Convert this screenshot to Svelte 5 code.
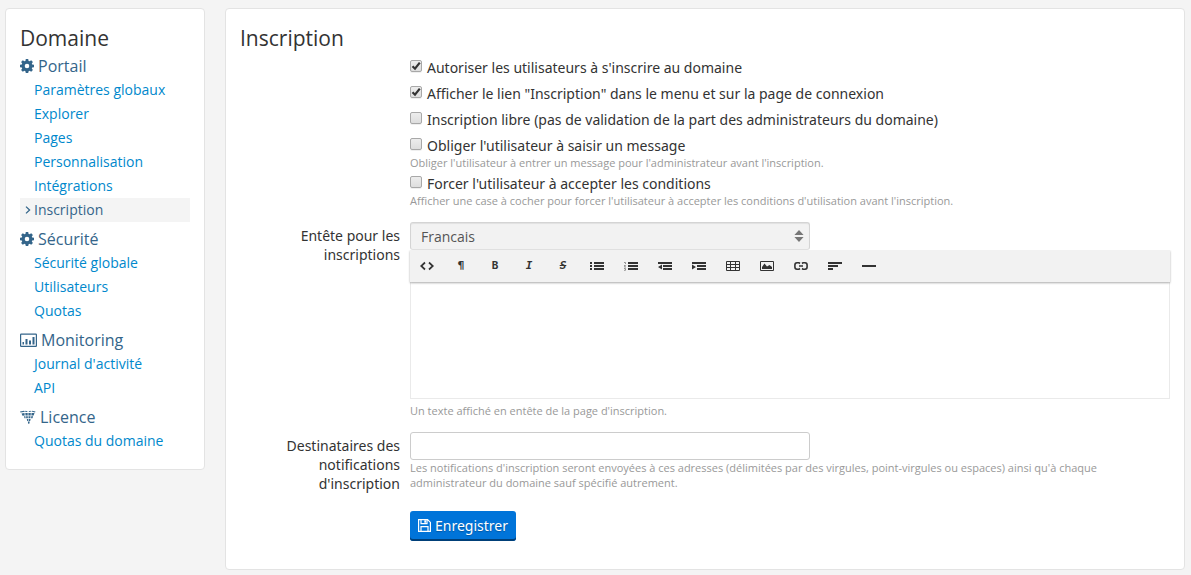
<script>
  const groups = [
    { title: 'Portail', icon: 'gear', items: ['Paramètres globaux', 'Explorer', 'Pages', 'Personnalisation', 'Intégrations', 'Inscription'] },
    { title: 'Sécurité', icon: 'gear', items: ['Sécurité globale', 'Utilisateurs', 'Quotas'] },
    { title: 'Monitoring', icon: 'chart', items: ["Journal d'activité", 'API'] },
    { title: 'Licence', icon: 'licence', items: ['Quotas du domaine'] }
  ];
  const current = 'Inscription';

  let options = $state([
    { id: 'allow', label: "Autoriser les utilisateurs à s'inscrire au domaine", checked: true },
    { id: 'link', label: 'Afficher le lien "Inscription" dans le menu et sur la page de connexion', checked: true },
    { id: 'free', label: 'Inscription libre (pas de validation de la part des administrateurs du domaine)', checked: false },
    { id: 'message', label: "Obliger l'utilisateur à saisir un message", checked: false, help: "Obliger l'utilisateur à entrer un message pour l'administrateur avant l'inscription." },
    { id: 'terms', label: "Forcer l'utilisateur à accepter les conditions", checked: false, help: "Afficher une case à cocher pour forcer l'utilisateur à accepter les conditions d'utilisation avant l'inscription." }
  ]);

  const tools = ['html', 'paragraph', 'bold', 'italic', 'strike', 'bullets', 'numbers', 'outdent', 'indent', 'table', 'image', 'link', 'align', 'rule'];
  const letters = { paragraph: '¶', bold: 'B', italic: 'I', strike: 'S' };
</script>

<div class="page">
  <nav class="panel sidebar">
    <h2>Domaine</h2>
    {#each groups as group}
      <section>
        <h3>
          {#if group.icon === 'gear'}
            <svg width="14" height="14" viewBox="0 0 14 14" aria-hidden="true">
              <path fill="currentColor" fill-rule="evenodd" d="M5.8 0h2.4l.4 1.9 1 .4 1.6-1.1 1.7 1.7-1.1 1.6.4 1 1.8.3v2.4l-1.8.4-.4 1 1.1 1.5-1.7 1.7-1.6-1-1 .4-.4 1.8H5.8l-.4-1.8-1-.4-1.6 1-1.7-1.7 1.1-1.5-.4-1L0 8.2V5.8l1.8-.3.4-1-1.1-1.6 1.7-1.7 1.6 1.1 1-.4zM7 4.7a2.3 2.3 0 1 0 0 4.6 2.3 2.3 0 0 0 0-4.6z" />
            </svg>
          {:else if group.icon === 'chart'}
            <svg width="17" height="14" viewBox="0 0 17 14" aria-hidden="true">
              <rect x=".6" y="1.1" width="15.8" height="12.2" rx=".6" fill="none" stroke="currentColor" stroke-width="1.2" />
              <path fill="currentColor" d="M2.500 9h1.500v2.500H2.500zM5.500 6h2v5.500h-2zM9 7.500h2v4H9zM12.500 4h2v7.500h-2z" />
            </svg>
          {:else}
            <svg width="16" height="14" viewBox="0 0 16 14" aria-hidden="true">
              <path fill="currentColor" d="M0 1.500l4-.7 1 1-4.500.7zM5.500.8l2.200.5-.7.700-2-.3zM8.500 1.300l2-.6.8.700-2 .6zM12 .700l3.500.7-.5 1-3.500-.8zM1.500 3.400l3-.4.2 2.500-2.200.2zM5.300 3h2.400v2.500H5.500zM8.400 3h2.400l-.1 2.500H8.400zM11.500 3h3l-.8 2.600h-2.300zM4 6.200h1.400l.2 2H4.500zM6.100 6.200h1.700v2H6.200zM8.500 6.200h2l-.1 2H8.500zM11.200 6.200h1.900l-.6 2h-1.400zM6.800 9h1.300v2h-.9zM8.700 9h1.900l-.4 2H8.700zM7.800 11.600h2l-.5 2.200H8.200z" />
            </svg>
          {/if}
          {group.title}
        </h3>
        <ul>
          {#each group.items as item}
            <li>
              <a href="#{item}" class:active={item === current} aria-current={item === current ? 'page' : undefined}>
                {#if item === current}
                  <svg class="chevron" width="6" height="8" viewBox="0 0 6 8" aria-hidden="true"><path d="M1 .6L4.600 4 1 7.400" fill="none" stroke="currentColor" stroke-width="1.300" /></svg>
                {/if}
                {item}
              </a>
            </li>
          {/each}
        </ul>
      </section>
    {/each}
  </nav>

  <main class="panel content">
    <h1>Inscription</h1>
    <form onsubmit={(e) => e.preventDefault()}>
      <div class="row">
        <div class="field checks">
          {#each options as option}
            <div class="option" class:helped={option.help}>
              <label class="check" for={option.id}>
                <input id={option.id} type="checkbox" bind:checked={option.checked} />
                <span>{option.label}</span>
              </label>
              {#if option.help}<p class="help">{option.help}</p>{/if}
            </div>
          {/each}
        </div>
      </div>

      <div class="row">
        <label class="name" for="language">Entête pour les inscriptions</label>
        <div class="field">
          <div class="select">
            <select id="language"><option>Francais</option></select>
            <svg width="10" height="12" viewBox="0 0 10 12" aria-hidden="true"><path d="M5 0l4.600 5H.4zM.4 7h9.200L5 12z" fill="#777" /></svg>
          </div>
          <div class="toolbar" role="toolbar">
            {#each tools as tool}
              <button type="button" aria-label={tool}>
                {#if letters[tool]}
                  <span class="letter {tool}">{letters[tool]}</span>
                {:else}
                  <svg width="14" height="10" viewBox="0 0 14 10" aria-hidden="true" fill="#333">
                    {#if tool === 'html'}
                      <path d="M5 1.500L1.200 5 5 8.500M9 1.500L12.800 5 9 8.500" fill="none" stroke="#333" stroke-width="1.700" />
                    {:else if tool === 'bullets'}
                      <path d="M0 1h2v2H0zM0 4h2v2H0zM0 7h2v2H0zM4 1h10v2H4zM4 4h10v2H4zM4 7h10v2H4z" />
                    {:else if tool === 'numbers'}
                      <path d="M4 1h10v2H4zM4 4h10v2H4zM4 7h10v2H4z" />
                      <path d="M0 1.500h1.500V3M0 4.500h1.500L.4 6H2M0 7.500h1.500v1.800H0" fill="none" stroke="#888" stroke-width=".9" />
                    {:else if tool === 'outdent'}
                      <path d="M0 1h14v2H0zM5 4h9v2H5zM5 7h9v2H5zM0 6l4-2.500v5z" />
                    {:else if tool === 'indent'}
                      <path d="M0 1h14v2H0zM5 4h9v2H5zM5 7h9v2H5zM0 3.500L4 6 0 8.500z" />
                    {:else if tool === 'table'}
                      <path d="M.5.500h13v9H.5zM.5 3.500h13M.5 6.500h13M4.500.500v9M9.500.500v9" fill="none" stroke="#333" />
                    {:else if tool === 'image'}
                      <path d="M.5.500h13v9H.5z" fill="none" stroke="#333" />
                      <path d="M2 8V6l2.500-3.500L7 5.500 9.500 4 12 6v2z" />
                    {:else if tool === 'link'}
                      <path d="M6 2.500L5 1.800H3A2.200 2.200 0 0 0 .9 4v2A2.200 2.200 0 0 0 3 8.200h2l1-.7M8 2.500l1-.7h2A2.200 2.200 0 0 1 13.100 4v2A2.200 2.200 0 0 1 11 8.200H9l-1-.7M5 5h4" fill="none" stroke="#333" stroke-width="1.600" />
                    {:else if tool === 'align'}
                      <path d="M0 1h14v2H0zM0 4h10v2H0zM0 7h5v2H0z" />
                    {:else}
                      <path d="M0 4h14v2H0z" />
                    {/if}
                  </svg>
                {/if}
              </button>
            {/each}
          </div>
          <textarea aria-label="Entête pour les inscriptions"></textarea>
          <p class="help">Un texte affiché en entête de la page d'inscription.</p>
        </div>
      </div>

      <div class="row">
        <label class="name" for="recipients">Destinataires des notifications d'inscription</label>
        <div class="field">
          <input id="recipients" class="text" type="text" />
          <p class="help">Les notifications d'inscription seront envoyées à ces adresses (délimitées par des virgules, point-virgules ou espaces) ainsi qu'à chaque administrateur du domaine sauf spécifié autrement.</p>
        </div>
      </div>

      <div class="row submit-row">
        <div class="field">
          <button class="save" type="submit">
            <svg width="13" height="13" viewBox="0 0 13 13" aria-hidden="true">
              <path d="M.6.600h9l2.800 2.800v9H.6zM3 .600v4h6v-4M3 12.400V7.600h7v4.800" fill="none" stroke="#fff" stroke-width="1.200" />
              <path d="M6.300 1.200H8v2.600H6.300z" fill="#fff" />
            </svg>
            Enregistrer
          </button>
        </div>
      </div>
    </form>
  </main>
</div>

<style>
  :global(body) {
    margin: 0;
    background: #f4f4f4;
    color: #333;
    font: 14px/19px "Open Sans", sans-serif;
  }
  * { box-sizing: border-box; }
  .page {
    display: flex;
    align-items: flex-start;
    gap: 20px;
    padding: 8px 6px 5px 5px;
  }
  .panel {
    background: #fff;
    border: 1px solid #e3e3e3;
    border-radius: 4px;
    padding: 14px;
  }
  .sidebar {
    flex: 0 0 200px;
    padding-bottom: 16px;
  }
  .content {
    flex: 1;
    min-width: 0;
  }
  h1, h2 {
    margin: 0 0 1px;
    font-size: 21px;
    line-height: 30px;
    font-weight: 400;
  }
  section { margin-bottom: 5px; }
  section:last-child { margin-bottom: 0; }
  h3 {
    display: flex;
    align-items: center;
    gap: 4px;
    margin: 0;
    font-size: 16px;
    line-height: 24px;
    font-weight: 400;
    color: #34658a;
  }
  ul {
    margin: 0;
    padding: 0;
    list-style: none;
  }
  li a {
    position: relative;
    display: block;
    padding-left: 14px;
    line-height: 24px;
    color: #0088cc;
    text-decoration: none;
  }
  li a.active {
    background: #f4f4f4;
    color: #34658a;
  }
  .chevron {
    position: absolute;
    left: 5px;
    top: 8px;
  }
  .row {
    display: flex;
    gap: 10px;
    margin-bottom: 14px;
  }
  .name {
    flex: 0 0 160px;
    padding: 4px 0 0 32px;
    text-align: right;
  }
  .name, .check, .save {
    font-family: "Noto Sans", "Open Sans", sans-serif;
  }
  .field {
    flex: 1;
    min-width: 0;
  }
  .field:first-child { margin-left: 170px; }
  .checks { padding-top: 2px; }
  .option { margin-bottom: 5px; }
  .option.helped { margin-bottom: 2px; }
  .option:last-child { margin-bottom: 0; }
  .check {
    display: flex;
    align-items: flex-start;
    gap: 5px;
    padding-top: 2px;
  }
  .check input {
    appearance: none;
    flex: none;
    width: 12px;
    height: 12px;
    margin: 2px 0 0;
    border: 1px solid #a8a8a8;
    border-radius: 2px;
    background: linear-gradient(#ededed, #dedede);
    box-shadow: 0 1px 0 #00000010;
  }
  .check input:checked {
    background: url("data:image/svg+xml,%3Csvg xmlns='http://www.w3.org/2000/svg' viewBox='0 0 10 10'%3E%3Cpath d='M1.500 5.200L4 7.700 8.800 1.600' fill='none' stroke='%23333' stroke-width='2.200'/%3E%3C/svg%3E") center / 10px 10px no-repeat, linear-gradient(#ededed, #dedede);
  }
  .help {
    margin: 0;
    font-size: 11px;
    line-height: 15px;
    color: #999;
  }
  .select {
    position: relative;
    max-width: 400px;
  }
  .select svg {
    position: absolute;
    right: 6px;
    top: 8px;
    pointer-events: none;
  }
  select {
    appearance: none;
    display: block;
    width: 100%;
    height: 28px;
    padding: 0 24px 0 10px;
    border: 1px solid #d4d4d4;
    border-bottom-color: #e0e0e0;
    border-radius: 3px;
    background: #f2f2f2;
    box-shadow: inset 0 1px 1px #00000012;
    color: #555;
    font: inherit;
  }
  .toolbar {
    position: relative;
    display: flex;
    flex-wrap: wrap;
    background: #f2f2f2;
    box-shadow: 0 1px 2px #00000055;
    clip-path: inset(0 -2px -3px -2px);
  }
  .toolbar button {
    display: flex;
    align-items: center;
    justify-content: center;
    width: 34px;
    height: 32px;
    padding: 0;
    border: 0;
    background: none;
    color: #333;
  }
  .letter {
    font: bold 11px/14px "DejaVu Sans Mono", monospace;
  }
  .italic {
    font-style: italic;
  }
  .strike {
    font-style: italic;
    text-decoration: line-through;
  }
  textarea {
    display: block;
    width: 100%;
    height: 117px;
    margin-bottom: 4px;
    padding: 10px;
    border: 1px solid #eaeaea;
    border-top: 0;
    resize: none;
    font: inherit;
  }
  .text {
    display: block;
    width: 100%;
    max-width: 400px;
    height: 28px;
    padding: 0 10px;
    border: 1px solid #ccc;
    border-radius: 3px;
    font: inherit;
  }
  .submit-row { margin-top: 18px; }
  .save {
    display: flex;
    align-items: center;
    gap: 4px;
    height: 30px;
    padding: 0 8px 2px;
    border: 0;
    border-radius: 3px;
    background: #0074d9;
    box-shadow: inset 0 -2px 0 #003f78;
    color: #fff;
    font-size: 14px;
    line-height: 19px;
    text-shadow: 0 1px 1px #00000040;
  }
</style>
